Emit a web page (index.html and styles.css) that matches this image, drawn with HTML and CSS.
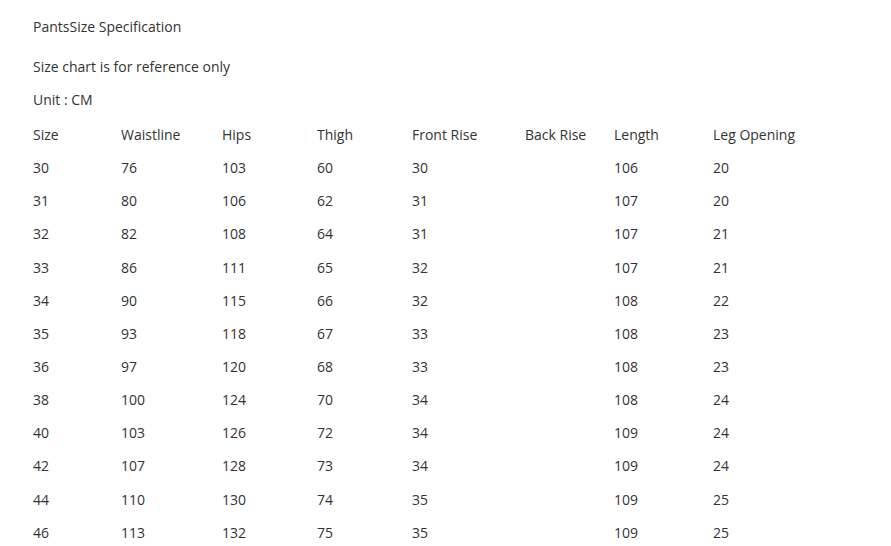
FILE: index.html
```html
<!DOCTYPE html>
<html lang="en">
<head>
<meta charset="utf-8">
<title>Pants Size Specification</title>
<link rel="stylesheet" href="styles.css">
</head>
<body>
<main class="page">
  <h1 class="title">PantsSize Specification</h1>
  <p class="note">Size chart is for reference only</p>
  <p class="unit">Unit : CM</p>
  <table class="chart">
    <colgroup>
      <col class="c-size"><col class="c-waist"><col class="c-hips"><col class="c-thigh">
      <col class="c-front"><col class="c-back"><col class="c-length"><col class="c-leg">
    </colgroup>
    <thead>
      <tr><th>Size</th><th>Waistline</th><th>Hips</th><th>Thigh</th><th>Front Rise</th><th>Back Rise</th><th>Length</th><th>Leg Opening</th></tr>
    </thead>
    <tbody>
      <tr><td>30</td><td>76</td><td>103</td><td>60</td><td>30</td><td></td><td>106</td><td>20</td></tr>
      <tr><td>31</td><td>80</td><td>106</td><td>62</td><td>31</td><td></td><td>107</td><td>20</td></tr>
      <tr><td>32</td><td>82</td><td>108</td><td>64</td><td>31</td><td></td><td>107</td><td>21</td></tr>
      <tr><td>33</td><td>86</td><td>111</td><td>65</td><td>32</td><td></td><td>107</td><td>21</td></tr>
      <tr><td>34</td><td>90</td><td>115</td><td>66</td><td>32</td><td></td><td>108</td><td>22</td></tr>
      <tr><td>35</td><td>93</td><td>118</td><td>67</td><td>33</td><td></td><td>108</td><td>23</td></tr>
      <tr><td>36</td><td>97</td><td>120</td><td>68</td><td>33</td><td></td><td>108</td><td>23</td></tr>
      <tr><td>38</td><td>100</td><td>124</td><td>70</td><td>34</td><td></td><td>108</td><td>24</td></tr>
      <tr><td>40</td><td>103</td><td>126</td><td>72</td><td>34</td><td></td><td>109</td><td>24</td></tr>
      <tr><td>42</td><td>107</td><td>128</td><td>73</td><td>34</td><td></td><td>109</td><td>24</td></tr>
      <tr><td>44</td><td>110</td><td>130</td><td>74</td><td>35</td><td></td><td>109</td><td>25</td></tr>
      <tr><td>46</td><td>113</td><td>132</td><td>75</td><td>35</td><td></td><td>109</td><td>25</td></tr>
    </tbody>
  </table>
</main>
</body>
</html>
```

FILE: styles.css
```css
html, body {
  margin: 0;
  padding: 0;
  background: #ffffff;
}
body {
  font-family: "Open Sans", "Liberation Sans", sans-serif;
  font-size: 14px;
  line-height: 21px;
  color: #333333;
}
.page {
  padding: 16px 0 0 33px;
}
.title {
  margin: 0 0 19px;
  font-size: 14px;
  font-weight: normal;
  line-height: 21px;
}
.note {
  margin: 0 0 12px;
}
.unit {
  margin: 0 0 8px;
}
.chart {
  border-collapse: collapse;
  border-spacing: 0;
  table-layout: fixed;
  width: 840px;
}
.chart th,
.chart td {
  padding: 6px 0;
  text-align: left;
  font-weight: normal;
  white-space: nowrap;
  vertical-align: middle;
}
.chart tr {
  height: 33.15px;
}
.c-size { width: 88px; }
.c-waist { width: 101px; }
.c-hips { width: 95px; }
.c-thigh { width: 95px; }
.c-front { width: 113px; }
.c-back { width: 89px; }
.c-length { width: 99px; }
.c-leg { width: 160px; }
```
